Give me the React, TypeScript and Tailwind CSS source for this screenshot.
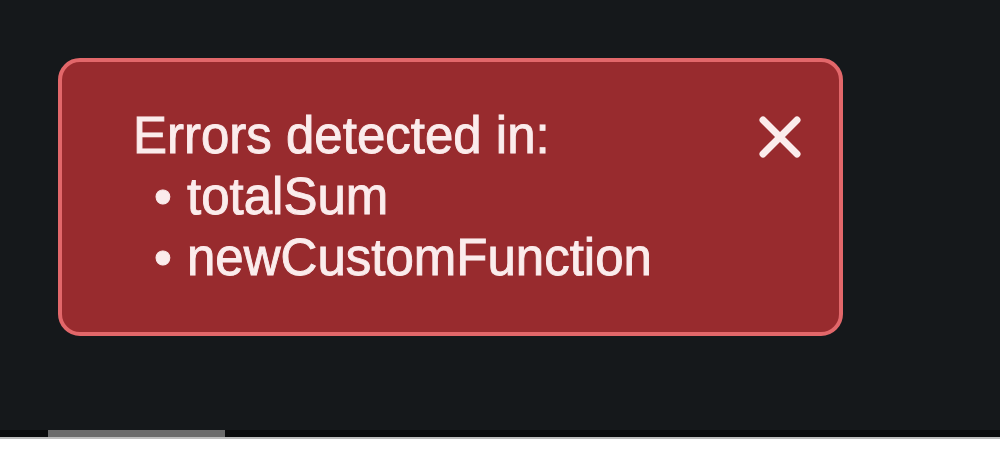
import React from "react";

export default function App() {
  return (
    <div className="w-[1000px] h-[454px] flex flex-col bg-white overflow-hidden">
      <div className="flex-1 flex flex-col bg-[#15181b]">
        <div className="flex-1 pt-[58px] pl-[58px]">
          <div
            className="w-[785px] h-[278px] rounded-[22px] border-4 border-[#e2676a] bg-[#982b2e] flex justify-between pl-[71px] pt-[43px] pr-[37px] text-[#fbecec]"
            style={{ fontFamily: '"Liberation Sans", Arial, sans-serif' }}
          >
            <div className="text-[51px] leading-[61px] [-webkit-text-stroke:0.9px_#fbecec]">
              <div>Errors detected in:</div>
              <div className="flex pl-[21px]">
                <span className="w-[33px]">•</span>
                <span>totalSum</span>
              </div>
              <div className="flex pl-[21px]">
                <span className="w-[33px]">•</span>
                <span>newCustomFunction</span>
              </div>
            </div>
            <svg
              className="mt-[10px] shrink-0"
              width="44"
              height="44"
              viewBox="0 0 44 44"
              fill="none"
              stroke="#fbecec"
              strokeWidth="7"
              strokeLinecap="round"
            >
              <path d="M5 5 L39 39 M39 5 L5 39" />
            </svg>
          </div>
        </div>
        <div className="h-[7px] bg-[#0b0c0d] flex">
          <div className="ml-[48px] w-[177px] h-full bg-[#6b6b6b]" />
        </div>
        <div className="h-[2px] bg-[#bdbdbd]" />
      </div>
      <div className="h-[15px] bg-white" />
    </div>
  );
}
